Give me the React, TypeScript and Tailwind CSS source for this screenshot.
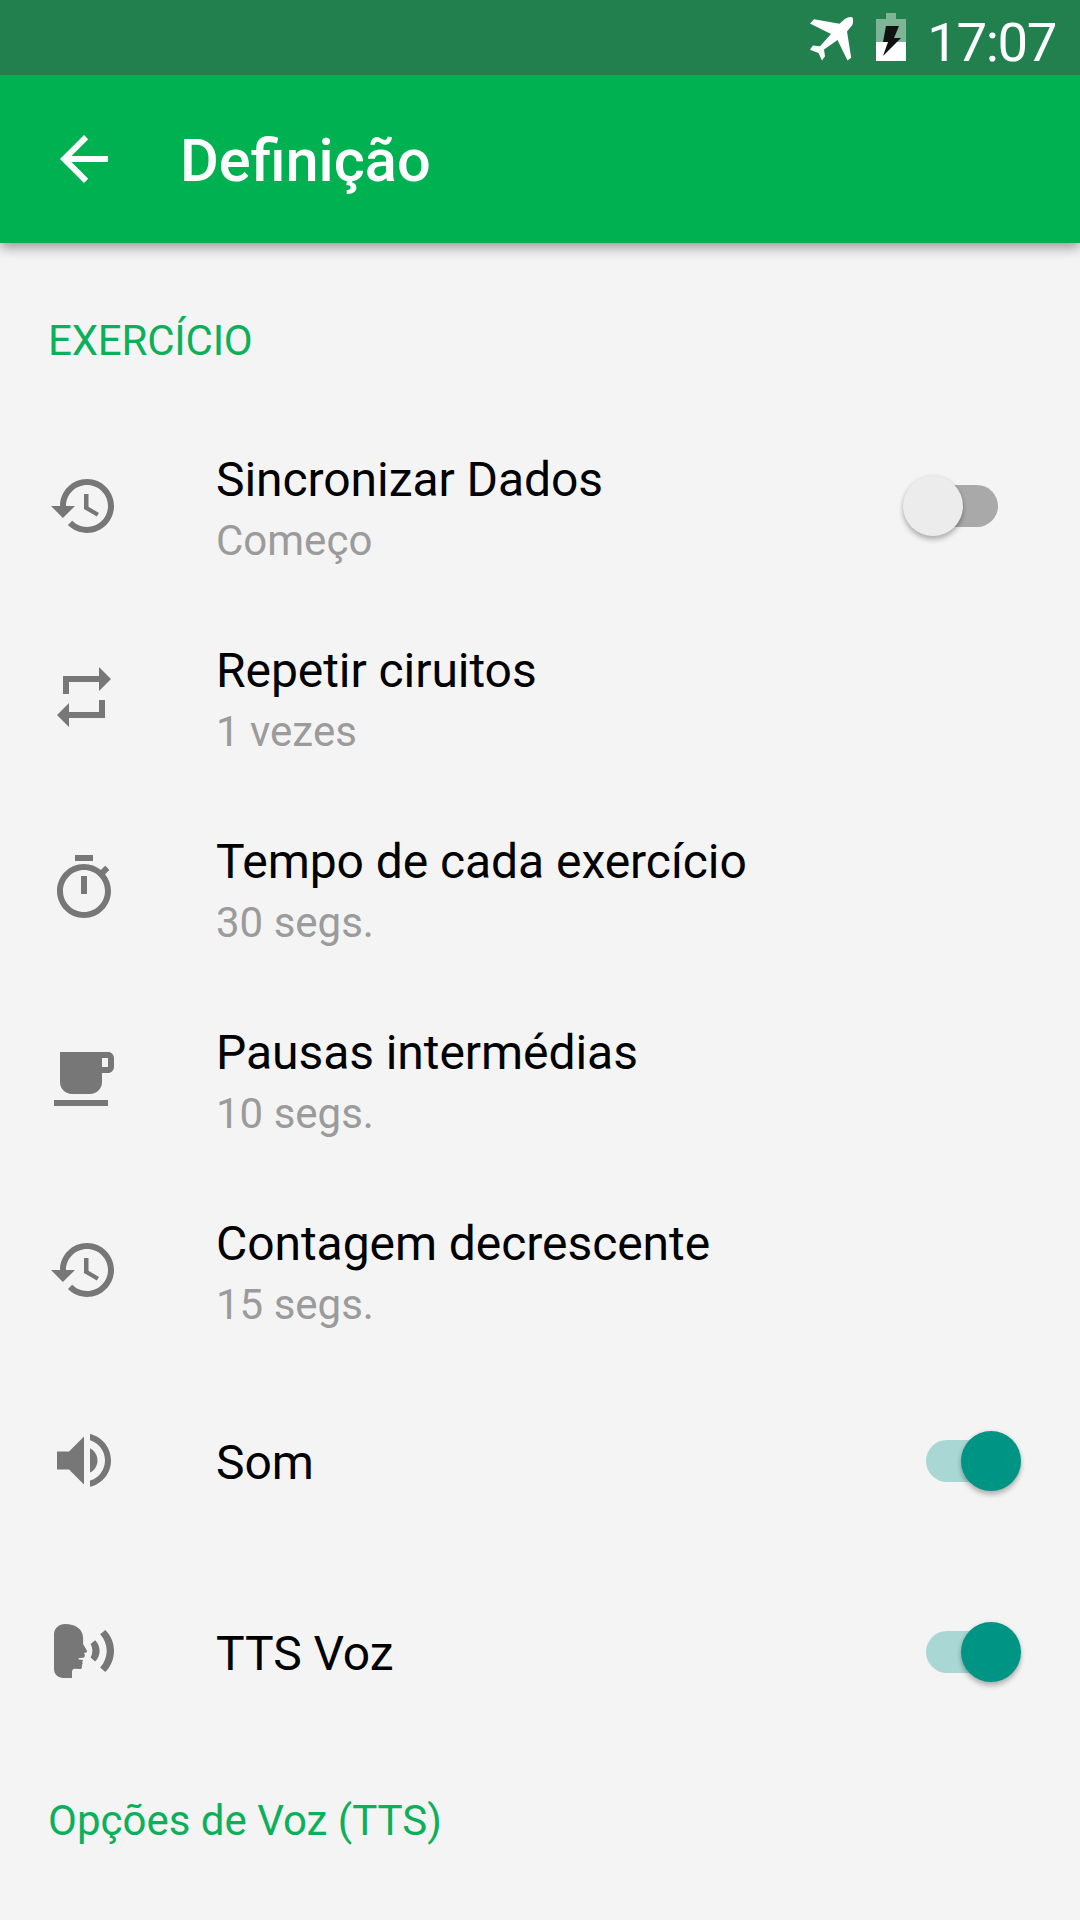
import { useState } from "react";
import clsx from "clsx";

interface Setting {
  id: string;
  title: string;
  summary?: string;
  icon: string;
  toggle?: boolean;
}

const icons: Record<string, string> = {
  history:
    "M13 3c-4.97 0-9 4.03-9 9H1l3.89 3.89.07.14L9 12H6c0-3.87 3.13-7 7-7s7 3.13 7 7-3.13 7-7 7c-1.93 0-3.68-.79-4.94-2.06l-1.42 1.42C8.27 19.99 10.51 21 13 21c4.97 0 9-4.03 9-9s-4.03-9-9-9zm-1 5v5l4.28 2.54.72-1.21-3.5-2.08V8H12z",
  repeat: "M7 7h10v3l4-4-4-4v3H5v6h2V7zm10 10H7v-3l-4 4 4 4v-3h12v-6h-2v4z",
  timer:
    "M15 1H9v2h6V1zm-4 13h2V8h-2v6zm8.03-6.61l1.42-1.42c-.43-.51-.9-.99-1.41-1.41l-1.42 1.42C16.07 4.74 14.12 4 12 4c-4.97 0-9 4.03-9 9s4.02 9 9 9 9-4.03 9-9c0-2.12-.74-4.07-1.97-5.61zM12 20c-3.87 0-7-3.13-7-7s3.13-7 7-7 7 3.13 7 7-3.13 7-7 7z",
  cafe: "M20 3H4v10c0 2.21 1.79 4 4 4h6c2.21 0 4-1.79 4-4v-3h2c1.11 0 2-.89 2-2V5c0-1.11-.89-2-2-2zm0 5h-2V5h2v3zM2 21h18v-2H2v2z",
  volume:
    "M3 8.8v6h4l5 5v-16l-5 5H3zm13.5 3c0-1.77-1.02-3.29-2.5-4.03v8.05c1.48-.73 2.5-2.25 2.5-4.02zM14 3.03v2.06c2.89.86 5 3.54 5 6.71s-2.11 5.85-5 6.71v2.06c4.01-.91 7-4.49 7-8.77s-2.99-7.86-7-8.77z",
  voice:
    "M2 6.2C2 4.2 3.6 2.7 5.7 2.7c3.5 0 5.9 1.7 6 4.6v2l1.2 2.1c.2.4.1.7-.2.8l-.7.1.3.7-.2.8-2 .3.2.4 1.4.2-.3.7.2.5-.3.4v.8c0 .4-.2.6-.6.6l-1.700-.1c-.7 0-1 .400-1 1.100v2H5.100C3.400 20.700 2 19.500 2 17.700zM14.200 9.300l1.500-1.200c1 1 1.500 2.200 1.500 3.500s-.5 2.600-1.500 3.600l-1.500-1.400c.8-1.400.8-3.100 0-4.500zM17.400 6.100l1.700-1.400c1.900 1.900 2.900 4.300 2.900 6.900s-1 5.200-2.900 7.100l-1.700-1.500c2.900-3.300 2.900-7.800 0-11.100z",
};

const settings: Setting[] = [
  { id: "sync", title: "Sincronizar Dados", summary: "Começo", icon: "history", toggle: true },
  { id: "repeat", title: "Repetir ciruitos", summary: "1 vezes", icon: "repeat" },
  { id: "exercise", title: "Tempo de cada exercício", summary: "30 segs.", icon: "timer" },
  { id: "rest", title: "Pausas intermédias", summary: "10 segs.", icon: "cafe" },
  { id: "countdown", title: "Contagem decrescente", summary: "15 segs.", icon: "history" },
  { id: "sound", title: "Som", icon: "volume", toggle: true },
  { id: "tts", title: "TTS Voz", icon: "voice", toggle: true },
];

const Icon = ({ path, className }: { path: string; className?: string }) => (
  <svg viewBox="0 0 24 24" fill="currentColor" className={className}>
    <path d={path} />
  </svg>
);

const StatusBar = () => (
  <div className="relative z-10 flex h-[75px] shrink-0 items-center justify-end bg-[#22804f] pr-6 text-white">
    {/* Airplane mode */}
    <svg viewBox="0 0 44 44" fill="currentColor" className="mt-[2px] h-11 w-11">
      <path d="M0 6.500L4 2.300L29.500 6.700L34.500 2.300Q38.500-.500 42.300.300Q44 3.500 42.300 8L37 14.500L41.200 40.700L37.500 43.600L27.500 23L14 32.500L15 39.300L12 43.500L8.500 36L0 32.700L2.800 28.500L10 29.300L21 17Z" />
    </svg>
    {/* Battery charging */}
    <svg viewBox="0 0 30 48" className="mb-px ml-[22px] h-12 w-[30px]">
      <path d="M10 0h10v6h10v42H0V6h10z" fill="#7fb497" />
      <path d="M0 29h30v19H0z" fill="#fff" />
      <path d="M10 13h13l-5 12h7L7 43l5-14H7z" fill="#111" />
    </svg>
    <span className="mt-[8px] w-[150px] text-right text-[54.5px] leading-[64px] tracking-[-1.4px]">17:07</span>
  </div>
);

const Toggle = ({ checked, onChange }: { checked: boolean; onChange: () => void }) => (
  <button
    role="switch"
    aria-checked={checked}
    onClick={onChange}
    className={clsx(
      "relative h-[42px] w-[84px] rounded-full",
      checked ? "mr-[70px] bg-[#a9d7d3]" : "mr-[82px] bg-[#a9a9a9]"
    )}
  >
    <span
      className={clsx(
        "absolute -top-[9.5px] h-[60px] w-[60px] rounded-full shadow-[0_4px_5px_rgba(0,0,0,0.24),0_0_4px_rgba(0,0,0,0.1)]",
        checked ? "left-[35px] bg-[#009485]" : "-left-[11.5px] bg-[#ececec]"
      )}
    />
  </button>
);

const App = () => {
  const [enabled, setEnabled] = useState<Record<string, boolean>>({
    sync: false,
    sound: true,
    tts: true,
  });

  const flip = (id: string) => setEnabled((prev) => ({ ...prev, [id]: !prev[id] }));

  return (
    <div className="flex h-[1920px] w-[1080px] flex-col overflow-hidden bg-[#f4f4f4] font-[Roboto,sans-serif] text-black">
      <StatusBar />

      {/* App bar */}
      <header className="flex h-[168px] shrink-0 items-center bg-[#00b152] pl-12 text-white shadow-[0_4px_12px_rgba(0,0,0,0.4)]">
        <Icon path="M20 11H7.830l5.590-5.590L12 4l-8 8 8 8 1.410-1.410L7.830 13H20v-2z" className="h-[72px] w-[72px]" />
        <h1 className="ml-[60px] mt-[3px] text-[59.5px] font-medium leading-[70px]">Definição</h1>
      </header>

      <h2 className="mt-[73px] h-[94.5px] shrink-0 pl-12 text-[42px] leading-[49px] tracking-[-0.2px] text-[#0cb05a]">
        EXERCÍCIO
      </h2>

      {/* Settings list */}
      <ul>
        {settings.map((item) => (
          <li key={item.id} className="flex h-[191px] items-center pl-12">
            <Icon path={icons[item.icon]} className="h-[72px] w-[72px] text-[#777]" />
            <div className="ml-24 flex flex-1 flex-col gap-2 pt-1">
              <span className="text-[48px] leading-[56px] tracking-[-0.06px]">{item.title}</span>
              {item.summary && (
                <span className="text-[42px] leading-[49px] text-[#9b9b9b]">{item.summary}</span>
              )}
            </div>
            {item.toggle && <Toggle checked={enabled[item.id]} onChange={() => flip(item.id)} />}
          </li>
        ))}
      </ul>

      <h2 className="mt-[48.5px] pl-12 text-[42px] leading-[49px] text-[#0cb05a]">Opções de Voz (TTS)</h2>
    </div>
  );
};

export default App;
